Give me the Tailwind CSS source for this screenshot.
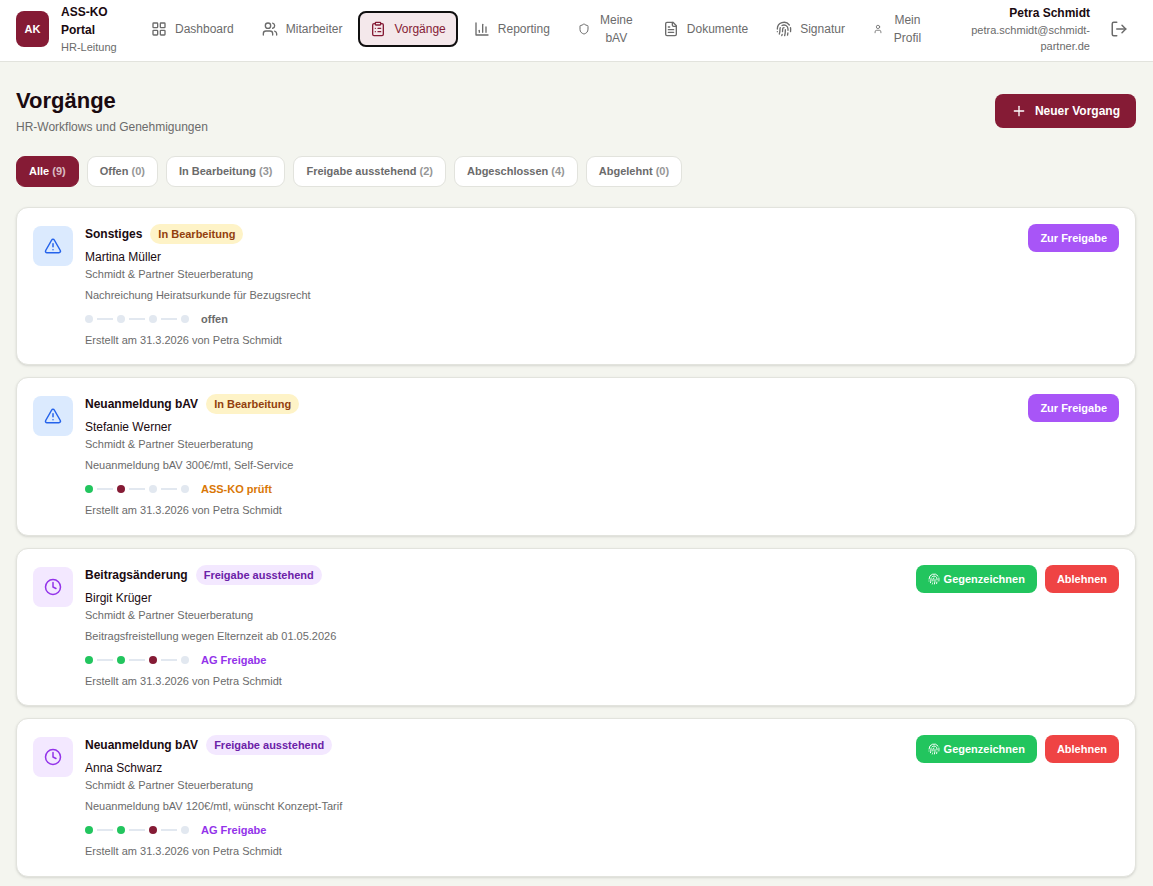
<!DOCTYPE html>
<html lang="de">
<head>
<meta charset="utf-8">
<meta name="viewport" content="width=device-width, initial-scale=1">
<title>ASS-KO Portal – Vorgänge</title>
<script src="https://cdn.jsdelivr.net/npm/@tailwindcss/browser@4"></script>
</head>
<body class="min-h-screen bg-[#f4f5ef] font-['Liberation_Sans',Arial,sans-serif] text-xs leading-[18px] text-[#1a0a10]">

<svg class="hidden" aria-hidden="true">
  <symbol id="i-grid" viewBox="0 0 24 24"><rect width="7" height="7" x="3" y="3" rx="1"/><rect width="7" height="7" x="14" y="3" rx="1"/><rect width="7" height="7" x="14" y="14" rx="1"/><rect width="7" height="7" x="3" y="14" rx="1"/></symbol>
  <symbol id="i-users" viewBox="0 0 24 24"><path d="M16 21v-2a4 4 0 0 0-4-4H6a4 4 0 0 0-4 4v2"/><circle cx="9" cy="7" r="4"/><path d="M22 21v-2a4 4 0 0 0-3-3.87"/><path d="M16 3.13a4 4 0 0 1 0 7.75"/></symbol>
  <symbol id="i-clipboard" viewBox="0 0 24 24"><rect width="8" height="4" x="8" y="2" rx="1"/><path d="M16 4h2a2 2 0 0 1 2 2v14a2 2 0 0 1-2 2H6a2 2 0 0 1-2-2V6a2 2 0 0 1 2-2h2"/><path d="M12 11h4"/><path d="M12 16h4"/><path d="M8 11h.01"/><path d="M8 16h.01"/></symbol>
  <symbol id="i-chart" viewBox="0 0 24 24"><path d="M3 3v18h18"/><path d="M18 17V9"/><path d="M13 17V5"/><path d="M8 17v-3"/></symbol>
  <symbol id="i-shield" viewBox="0 0 24 24"><path d="M20 13c0 5-3.5 7.5-7.66 8.95a1 1 0 0 1-.67-.01C7.5 20.5 4 18 4 13V6a1 1 0 0 1 1-1c2 0 4.5-1.2 6.24-2.72a1.17 1.17 0 0 1 1.52 0C14.51 3.81 17 5 19 5a1 1 0 0 1 1 1z"/></symbol>
  <symbol id="i-file" viewBox="0 0 24 24"><path d="M15 2H6a2 2 0 0 0-2 2v16a2 2 0 0 0 2 2h12a2 2 0 0 0 2-2V7Z"/><path d="M14 2v4a2 2 0 0 0 2 2h4"/><path d="M10 9H8"/><path d="M16 13H8"/><path d="M16 17H8"/></symbol>
  <symbol id="i-finger" viewBox="0 0 24 24"><path d="M12 10a2 2 0 0 0-2 2c0 1.02-.1 2.51-.26 4"/><path d="M14 13.12c0 2.38 0 6.38-1 8.88"/><path d="M17.29 21.02c.12-.6.43-2.3.5-3.02"/><path d="M2 12a10 10 0 0 1 18-6"/><path d="M2 16h.01"/><path d="M21.8 16c.2-2 .131-5.354 0-6"/><path d="M5 19.5C5.5 18 6 15 6 12a6 6 0 0 1 .34-2"/><path d="M8.65 22c.21-.66.45-1.32.57-2"/><path d="M9 6.8a6 6 0 0 1 9 5.2v2"/></symbol>
  <symbol id="i-user" viewBox="0 0 24 24"><path d="M19 21v-2a4 4 0 0 0-4-4H9a4 4 0 0 0-4 4v2"/><circle cx="12" cy="7" r="4"/></symbol>
  <symbol id="i-logout" viewBox="0 0 24 24"><path d="M9 21H5a2 2 0 0 1-2-2V5a2 2 0 0 1 2-2h4"/><path d="m16 17 5-5-5-5"/><path d="M21 12H9"/></symbol>
  <symbol id="i-plus" viewBox="0 0 24 24"><path d="M5 12h14"/><path d="M12 5v14"/></symbol>
  <symbol id="i-warn" viewBox="0 0 24 24"><path d="m21.73 18-8-14a2 2 0 0 0-3.48 0l-8 14A2 2 0 0 0 4 21h16a2 2 0 0 0 1.73-3"/><path d="M12 9v4"/><path d="M12 17h.01"/></symbol>
  <symbol id="i-clock" viewBox="0 0 24 24"><circle cx="12" cy="12" r="10"/><path d="M12 6v6l4 2"/></symbol>
</svg>

<header class="flex items-center border-b border-[#e2e3dd] bg-white pr-[17px] pb-[3px] pl-4 text-[#6b6b6b]">
  <div class="flex h-[58px] shrink-0 items-center gap-3">
    <div class="flex h-9 w-[33px] items-center justify-center rounded-lg bg-[#851b35] text-[11px] font-bold text-white">AK</div>
    <div class="w-[62px]">
      <p class="font-bold text-[#1a0a10]">ASS-KO Portal</p>
      <p class="text-[11px] leading-4">HR-Leitung</p>
    </div>
  </div>
  <nav class="ml-4 flex shrink-0 items-center gap-1" aria-label="Hauptnavigation">
    <button type="button" class="flex h-9 items-center gap-2 rounded-lg px-3"><svg class="size-4 fill-none stroke-current stroke-2 [stroke-linecap:round] [stroke-linejoin:round]" aria-hidden="true"><use href="#i-grid"/></svg>Dashboard</button>
    <button type="button" class="flex h-9 items-center gap-2 rounded-lg px-3"><svg class="size-4 fill-none stroke-current stroke-2 [stroke-linecap:round] [stroke-linejoin:round]" aria-hidden="true"><use href="#i-users"/></svg>Mitarbeiter</button>
    <button type="button" aria-current="page" class="flex h-9 items-center gap-2 rounded-lg bg-[#f4e8eb] px-3 text-[#851b35] outline-2 -outline-offset-2 outline-[#101010]"><svg class="size-4 fill-none stroke-current stroke-2 [stroke-linecap:round] [stroke-linejoin:round]" aria-hidden="true"><use href="#i-clipboard"/></svg>Vorgänge</button>
    <button type="button" class="flex h-9 items-center gap-2 rounded-lg px-3"><svg class="size-4 fill-none stroke-current stroke-2 [stroke-linecap:round] [stroke-linejoin:round]" aria-hidden="true"><use href="#i-chart"/></svg>Reporting</button>
    <button type="button" class="flex h-9 items-center gap-2 rounded-lg px-3"><svg class="size-3 fill-none stroke-current stroke-2 [stroke-linecap:round] [stroke-linejoin:round]" aria-hidden="true"><use href="#i-shield"/></svg><span class="w-[37px]">Meine bAV</span></button>
    <button type="button" class="flex h-9 items-center gap-2 rounded-lg px-3"><svg class="size-4 fill-none stroke-current stroke-2 [stroke-linecap:round] [stroke-linejoin:round]" aria-hidden="true"><use href="#i-file"/></svg>Dokumente</button>
    <button type="button" class="flex h-9 items-center gap-2 rounded-lg px-3"><svg class="size-4 fill-none stroke-current stroke-2 [stroke-linecap:round] [stroke-linejoin:round]" aria-hidden="true"><use href="#i-finger"/></svg>Signatur</button>
    <button type="button" class="flex h-9 items-center gap-2 rounded-lg px-3"><svg class="size-[10px] fill-none stroke-current stroke-2 [stroke-linecap:round] [stroke-linejoin:round]" aria-hidden="true"><use href="#i-user"/></svg><span class="w-[33px]">Mein Profil</span></button>
  </nav>
  <div class="ml-auto flex items-center gap-3">
    <div class="text-right">
      <p class="font-bold text-[#1a0a10]">Petra Schmidt</p>
      <p class="text-[11px] leading-4">petra.schmidt@schmidt-<wbr>partner.de</p>
    </div>
    <button type="button" aria-label="Abmelden" class="rounded-lg p-2"><svg class="size-[18px] fill-none stroke-current stroke-2 [stroke-linecap:round] [stroke-linejoin:round]" aria-hidden="true"><use href="#i-logout"/></svg></button>
  </div>
</header>

<main class="pt-6 pr-[17px] pb-2 pl-4">
  <div class="flex items-center justify-between">
    <div>
      <h1 class="text-[22px] leading-[30px] font-extrabold">Vorgänge</h1>
      <p class="mt-0.5 text-[#6b6b6b]">HR-Workflows und Genehmigungen</p>
    </div>
    <button type="button" class="flex h-[34px] items-center gap-2 rounded-lg bg-[#851b35] px-4 font-bold text-white"><svg class="size-4 fill-none stroke-current stroke-2 [stroke-linecap:round] [stroke-linejoin:round]" aria-hidden="true"><use href="#i-plus"/></svg>Neuer Vorgang</button>
  </div>

  <div class="mt-5 flex flex-wrap gap-2 text-[11px] font-bold text-[#6b6b6b]" role="group" aria-label="Statusfilter">
    <button type="button" aria-pressed="true" class="h-[31px] rounded-[9px] border border-[#851b35] bg-[#851b35] px-3 pb-0.5 text-white">Alle <span class="opacity-70">(9)</span></button>
    <button type="button" class="h-[31px] rounded-[9px] border border-[#e2e3dd] bg-white px-3 pb-0.5">Offen <span class="opacity-70">(0)</span></button>
    <button type="button" class="h-[31px] rounded-[9px] border border-[#e2e3dd] bg-white px-3 pb-0.5">In Bearbeitung <span class="opacity-70">(3)</span></button>
    <button type="button" class="h-[31px] rounded-[9px] border border-[#e2e3dd] bg-white px-3 pb-0.5">Freigabe ausstehend <span class="opacity-70">(2)</span></button>
    <button type="button" class="h-[31px] rounded-[9px] border border-[#e2e3dd] bg-white px-3 pb-0.5">Abgeschlossen <span class="opacity-70">(4)</span></button>
    <button type="button" class="h-[31px] rounded-[9px] border border-[#e2e3dd] bg-white px-3 pb-0.5">Abgelehnt <span class="opacity-70">(0)</span></button>
  </div>

  <div class="mt-5 flex flex-col gap-3">
    <article class="flex items-start gap-3 rounded-xl border border-[#e2e3dd] bg-white p-4 pb-[15px] shadow-sm">
      <div class="mt-0.5 flex size-10 shrink-0 items-center justify-center rounded-lg bg-[#dbeafe] text-[#2563eb]"><svg class="size-[18px] fill-none stroke-current stroke-2 [stroke-linecap:round] [stroke-linejoin:round]" aria-hidden="true"><use href="#i-warn"/></svg></div>
      <div class="flex-1 text-[11px] leading-[17px] text-[#6b6b6b]">
        <div class="flex items-center gap-2"><h2 class="text-xs font-bold text-[#1a0a10]">Sonstiges</h2><span class="rounded-full bg-[#fef3c7] px-2 leading-5 font-bold text-[#92400e]">In Bearbeitung</span></div>
        <p class="mt-1 text-xs leading-[18px] text-[#1a0a10]">Martina Müller</p>
        <p>Schmidt &amp; Partner Steuerberatung</p>
        <p class="mt-1">Nachreichung Heiratsurkunde für Bezugsrecht</p>
        <div class="mt-[7px] flex items-center gap-1 leading-4"><i class="size-2 rounded-full bg-[#e2e8f0]"></i><i class="h-0.5 w-4 bg-[#e2e8f0]"></i><i class="size-2 rounded-full bg-[#e2e8f0]"></i><i class="h-0.5 w-4 bg-[#e2e8f0]"></i><i class="size-2 rounded-full bg-[#e2e8f0]"></i><i class="h-0.5 w-4 bg-[#e2e8f0]"></i><i class="size-2 rounded-full bg-[#e2e8f0]"></i><span class="ml-2 font-bold">offen</span></div>
        <p class="mt-[5px]">Erstellt am 31.3.2026 von Petra Schmidt</p>
      </div>
      <div class="flex gap-2 text-[11px] font-bold text-white"><button type="button" class="h-7 rounded-lg bg-[#a855f7] px-3">Zur Freigabe</button></div>
    </article>

    <article class="flex items-start gap-3 rounded-xl border border-[#e2e3dd] bg-white p-4 shadow-sm">
      <div class="mt-0.5 flex size-10 shrink-0 items-center justify-center rounded-lg bg-[#dbeafe] text-[#2563eb]"><svg class="size-[18px] fill-none stroke-current stroke-2 [stroke-linecap:round] [stroke-linejoin:round]" aria-hidden="true"><use href="#i-warn"/></svg></div>
      <div class="flex-1 text-[11px] leading-[17px] text-[#6b6b6b]">
        <div class="flex items-center gap-2"><h2 class="text-xs font-bold text-[#1a0a10]">Neuanmeldung bAV</h2><span class="rounded-full bg-[#fef3c7] px-2 leading-5 font-bold text-[#92400e]">In Bearbeitung</span></div>
        <p class="mt-1 text-xs leading-[18px] text-[#1a0a10]">Stefanie Werner</p>
        <p>Schmidt &amp; Partner Steuerberatung</p>
        <p class="mt-1">Neuanmeldung bAV 300€/mtl, Self-Service</p>
        <div class="mt-[7px] flex items-center gap-1 leading-4"><i class="size-2 rounded-full bg-[#22c55e]"></i><i class="h-0.5 w-4 bg-[#e2e8f0]"></i><i class="size-2 rounded-full bg-[#851b35]"></i><i class="h-0.5 w-4 bg-[#e2e8f0]"></i><i class="size-2 rounded-full bg-[#e2e8f0]"></i><i class="h-0.5 w-4 bg-[#e2e8f0]"></i><i class="size-2 rounded-full bg-[#e2e8f0]"></i><span class="ml-2 font-bold text-[#d97706]">ASS-KO prüft</span></div>
        <p class="mt-[5px]">Erstellt am 31.3.2026 von Petra Schmidt</p>
      </div>
      <div class="flex gap-2 text-[11px] font-bold text-white"><button type="button" class="h-7 rounded-lg bg-[#a855f7] px-3">Zur Freigabe</button></div>
    </article>

    <article class="flex items-start gap-3 rounded-xl border border-[#e2e3dd] bg-white p-4 pb-[15px] shadow-sm">
      <div class="mt-0.5 flex size-10 shrink-0 items-center justify-center rounded-lg bg-[#f3e8ff] text-[#9333ea]"><svg class="size-[18px] fill-none stroke-current stroke-2 [stroke-linecap:round] [stroke-linejoin:round]" aria-hidden="true"><use href="#i-clock"/></svg></div>
      <div class="flex-1 text-[11px] leading-[17px] text-[#6b6b6b]">
        <div class="flex items-center gap-2"><h2 class="text-xs font-bold text-[#1a0a10]">Beitragsänderung</h2><span class="rounded-full bg-[#f3e8ff] px-2 leading-5 font-bold text-[#6b21a8]">Freigabe ausstehend</span></div>
        <p class="mt-1 text-xs leading-[18px] text-[#1a0a10]">Birgit Krüger</p>
        <p>Schmidt &amp; Partner Steuerberatung</p>
        <p class="mt-1">Beitragsfreistellung wegen Elternzeit ab 01.05.2026</p>
        <div class="mt-[7px] flex items-center gap-1 leading-4"><i class="size-2 rounded-full bg-[#22c55e]"></i><i class="h-0.5 w-4 bg-[#e2e8f0]"></i><i class="size-2 rounded-full bg-[#22c55e]"></i><i class="h-0.5 w-4 bg-[#e2e8f0]"></i><i class="size-2 rounded-full bg-[#851b35]"></i><i class="h-0.5 w-4 bg-[#e2e8f0]"></i><i class="size-2 rounded-full bg-[#e2e8f0]"></i><span class="ml-2 font-bold text-[#9333ea]">AG Freigabe</span></div>
        <p class="mt-[5px]">Erstellt am 31.3.2026 von Petra Schmidt</p>
      </div>
      <div class="flex gap-2 text-[11px] font-bold text-white"><button type="button" class="flex h-7 items-center gap-1 rounded-lg bg-[#22c55e] px-3"><svg class="size-3 fill-none stroke-current stroke-2 [stroke-linecap:round] [stroke-linejoin:round]" aria-hidden="true"><use href="#i-finger"/></svg>Gegenzeichnen</button><button type="button" class="h-7 rounded-lg bg-[#ef4444] px-3">Ablehnen</button></div>
    </article>

    <article class="flex items-start gap-3 rounded-xl border border-[#e2e3dd] bg-white p-4 shadow-sm">
      <div class="mt-0.5 flex size-10 shrink-0 items-center justify-center rounded-lg bg-[#f3e8ff] text-[#9333ea]"><svg class="size-[18px] fill-none stroke-current stroke-2 [stroke-linecap:round] [stroke-linejoin:round]" aria-hidden="true"><use href="#i-clock"/></svg></div>
      <div class="flex-1 text-[11px] leading-[17px] text-[#6b6b6b]">
        <div class="flex items-center gap-2"><h2 class="text-xs font-bold text-[#1a0a10]">Neuanmeldung bAV</h2><span class="rounded-full bg-[#f3e8ff] px-2 leading-5 font-bold text-[#6b21a8]">Freigabe ausstehend</span></div>
        <p class="mt-1 text-xs leading-[18px] text-[#1a0a10]">Anna Schwarz</p>
        <p>Schmidt &amp; Partner Steuerberatung</p>
        <p class="mt-1">Neuanmeldung bAV 120€/mtl, wünscht Konzept-Tarif</p>
        <div class="mt-[7px] flex items-center gap-1 leading-4"><i class="size-2 rounded-full bg-[#22c55e]"></i><i class="h-0.5 w-4 bg-[#e2e8f0]"></i><i class="size-2 rounded-full bg-[#22c55e]"></i><i class="h-0.5 w-4 bg-[#e2e8f0]"></i><i class="size-2 rounded-full bg-[#851b35]"></i><i class="h-0.5 w-4 bg-[#e2e8f0]"></i><i class="size-2 rounded-full bg-[#e2e8f0]"></i><span class="ml-2 font-bold text-[#9333ea]">AG Freigabe</span></div>
        <p class="mt-[5px]">Erstellt am 31.3.2026 von Petra Schmidt</p>
      </div>
      <div class="flex gap-2 text-[11px] font-bold text-white"><button type="button" class="flex h-7 items-center gap-1 rounded-lg bg-[#22c55e] px-3"><svg class="size-3 fill-none stroke-current stroke-2 [stroke-linecap:round] [stroke-linejoin:round]" aria-hidden="true"><use href="#i-finger"/></svg>Gegenzeichnen</button><button type="button" class="h-7 rounded-lg bg-[#ef4444] px-3">Ablehnen</button></div>
    </article>
  </div>
</main>
</body>
</html>
